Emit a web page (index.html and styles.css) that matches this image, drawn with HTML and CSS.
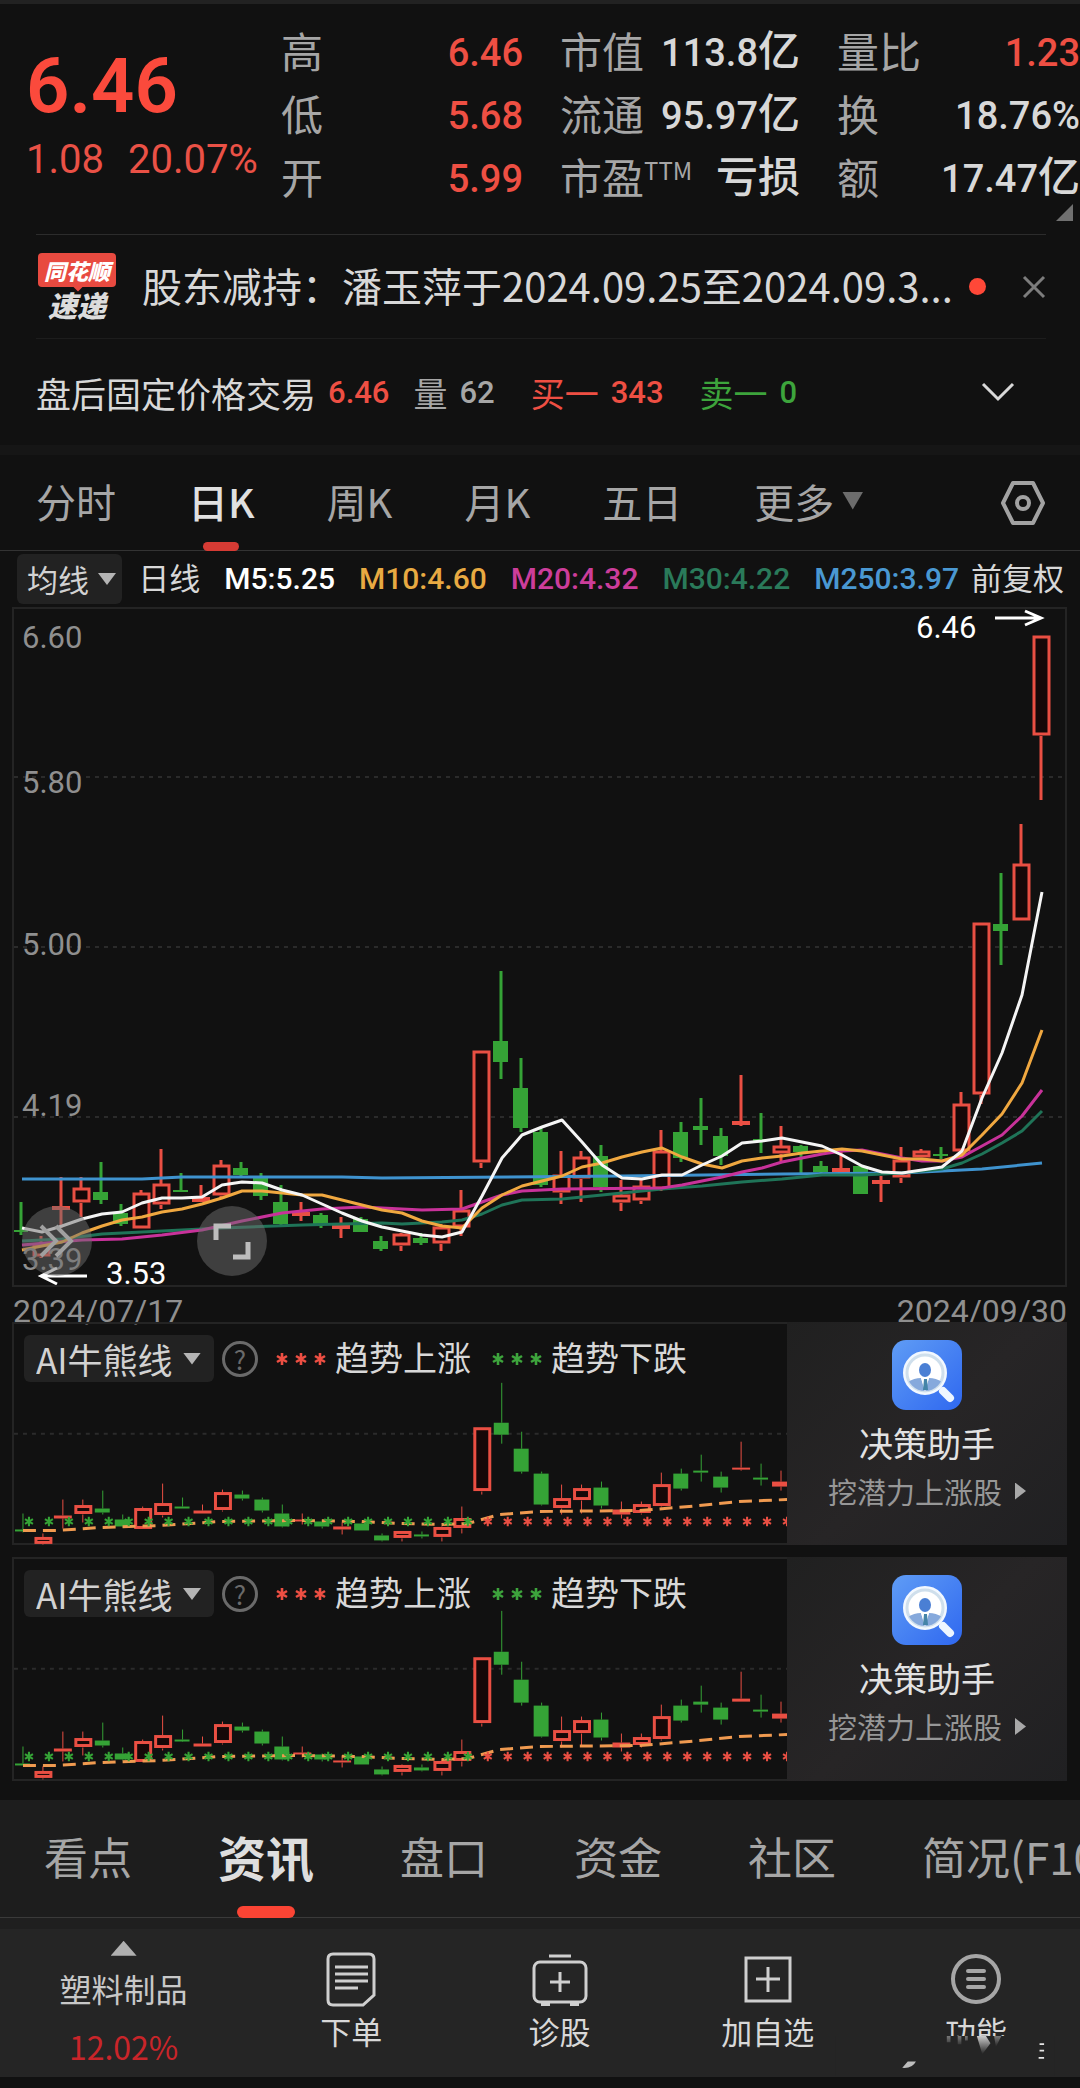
FILE: index.html
```html
<!DOCTYPE html>
<html lang="zh-CN">
<head>
    <meta charset="UTF-8">
    <meta name="viewport" content="width=device-width, initial-scale=1.0">
    <title>个股行情 - 日K</title>
    <link rel="stylesheet" href="styles.css">
</head>
<body>
    <header class="quote">
        <div class="price">
            <div class="price-now">6.46</div>
            <div class="price-change"><span>1.08</span><span>20.07%</span></div>
        </div>
        <dl class="stats">
            <div><dt>高</dt><dd class="up">6.46</dd></div>
            <div><dt>低</dt><dd class="up">5.68</dd></div>
            <div><dt>开</dt><dd class="up">5.99</dd></div>
        </dl>
        <dl class="stats">
            <div><dt>市值</dt><dd>113.8<span class="unit">亿</span></dd></div>
            <div><dt>流通</dt><dd>95.97<span class="unit">亿</span></dd></div>
            <div><dt>市盈<span class="ttm">TTM</span></dt><dd><span class="unit">亏损</span></dd></div>
        </dl>
        <dl class="stats">
            <div><dt>量比</dt><dd class="up">1.23</dd></div>
            <div><dt>换</dt><dd>18.76%</dd></div>
            <div><dt>额</dt><dd>17.47<span class="unit">亿</span></dd></div>
        </dl>
        <span class="corner"></span>
    </header>

    <section class="news">
        <div class="news-logo">
            <span class="news-brand">同花顺</span>
            <span class="news-name">速递</span>
        </div>
        <a class="news-text" href="#">股东减持：潘玉萍于2024.09.25至2024.09.3...</a>
        <span class="news-dot"></span>
        <button class="icon-btn" type="button" aria-label="关闭">
            <svg width="24" height="24" viewBox="0 0 24 24"><path d="M2 2L22 22M22 2L2 22" stroke="#7d7d7d" stroke-width="3"/></svg>
        </button>
    </section>

    <section class="after-hours">
        <span class="ah-title">盘后固定价格交易</span>
        <b class="up ah-price">6.46</b>
        <span class="muted">量</span><b class="muted ah-volume">62</b>
        <span class="up">买一</span><b class="up ah-buy">343</b>
        <span class="down">卖一</span><b class="down">0</b>
        <button class="icon-btn ah-more" type="button" aria-label="展开">
            <svg width="34" height="22" viewBox="0 0 34 22"><path d="M2 3L17 18L32 3" fill="none" stroke="#d8d8d8" stroke-width="3"/></svg>
        </button>
    </section>

    <nav class="periods">
        <button type="button">分时</button>
        <button type="button" class="active">日K</button>
        <button type="button">周K</button>
        <button type="button">月K</button>
        <button type="button">五日</button>
        <button type="button" class="more">更多<i class="caret"></i></button>
        <button type="button" class="settings" aria-label="设置">
            <svg width="46" height="46" viewBox="0 0 46 46" fill="none" stroke="#a2a2a2" stroke-width="4">
                <path d="M13 3H33L43 23L33 43H13L3 23Z" stroke-linejoin="round"/>
                <circle cx="23" cy="23" r="6"/>
            </svg>
        </button>
    </nav>

    <section class="averages">
        <label class="drop drop-ma">
            <select aria-label="主图指标"><option>均线</option></select>
            <i class="caret"></i>
        </label>
        <span class="ma-cycle">日线</span>
        <span class="ma-item m5">M5:5.25</span>
        <span class="ma-item m10">M10:4.60</span>
        <span class="ma-item m20">M20:4.32</span>
        <span class="ma-item m30">M30:4.22</span>
        <span class="ma-item m250">M250:3.97</span>
        <span class="ma-adjust">前复权</span>
    </section>

    <section class="chart">
        <svg id="kline" viewBox="13 607 1055 680"></svg>
        <button class="round round-left" type="button" aria-label="展开左侧">
            <svg viewBox="0 0 70 70" fill="none" stroke="#a0a0a0" stroke-width="4"><path d="M19 20L34 35L19 50M34 20L49 35L34 50"/></svg>
        </button>
        <button class="round round-full" type="button" aria-label="全屏">
            <svg viewBox="0 0 70 70" fill="none" stroke="#bdbdbd" stroke-width="5"><path d="M19 34V20H34M51 36V51H36"/></svg>
        </button>
    </section>
    <div class="dates"><span>2024/07/17</span><span>2024/09/30</span></div>

    <section class="panel">
        <div class="panel-main">
            <svg class="mini" data-top="61" data-ratio="0.568" viewBox="13 0 775 224"></svg>
            <div class="panel-head">
                <label class="drop drop-ai">
                    <select aria-label="副图指标一"><option>AI牛熊线</option></select>
                    <i class="caret"></i>
                </label>
                <button class="help" type="button">?</button>
                <svg class="stars up" viewBox="0 0 52 14"><use href="#star" x="7" y="7"/><use href="#star" x="26" y="7"/><use href="#star" x="45" y="7"/></svg>
                <span>趋势上涨</span>
                <svg class="stars down" viewBox="0 0 52 14"><use href="#star" x="7" y="7"/><use href="#star" x="26" y="7"/><use href="#star" x="45" y="7"/></svg>
                <span>趋势下跌</span>
            </div>
        </div>
        <a class="helper" href="#">
            <svg class="helper-icon" viewBox="0 0 70 70"><use href="#helper"/></svg>
            <span class="helper-title">决策助手</span>
            <span class="helper-sub">挖潜力上涨股<i class="arrow"></i></span>
        </a>
    </section>

    <section class="panel">
        <div class="panel-main">
            <svg class="mini" data-top="54" data-ratio="0.589" viewBox="13 0 775 224"></svg>
            <div class="panel-head">
                <label class="drop drop-ai">
                    <select aria-label="副图指标二"><option>AI牛熊线</option></select>
                    <i class="caret"></i>
                </label>
                <button class="help" type="button">?</button>
                <svg class="stars up" viewBox="0 0 52 14"><use href="#star" x="7" y="7"/><use href="#star" x="26" y="7"/><use href="#star" x="45" y="7"/></svg>
                <span>趋势上涨</span>
                <svg class="stars down" viewBox="0 0 52 14"><use href="#star" x="7" y="7"/><use href="#star" x="26" y="7"/><use href="#star" x="45" y="7"/></svg>
                <span>趋势下跌</span>
            </div>
        </div>
        <a class="helper" href="#">
            <svg class="helper-icon" viewBox="0 0 70 70"><use href="#helper"/></svg>
            <span class="helper-title">决策助手</span>
            <span class="helper-sub">挖潜力上涨股<i class="arrow"></i></span>
        </a>
    </section>

    <nav class="sections">
        <button type="button">看点</button>
        <button type="button" class="active">资讯</button>
        <button type="button">盘口</button>
        <button type="button">资金</button>
        <button type="button">社区</button>
        <button type="button">简况(F10)</button>
    </nav>

    <footer class="toolbar">
        <button type="button" class="sector">
            <i class="caret-up"></i>
            <span>塑料制品</span>
            <span class="sector-change">12.02%</span>
        </button>
        <button type="button">
            <svg width="56" height="56" viewBox="0 0 56 56" fill="none" stroke="#cfcfcf" stroke-width="3">
                <path d="M10 3H46Q51 3 51 8V44L40 54H10Q5 54 5 49V8Q5 3 10 3Z"/>
                <path d="M12 16H45M12 23H45M12 30H45M12 37H35"/>
            </svg>
            <span>下单</span>
        </button>
        <button type="button">
            <svg width="56" height="56" viewBox="0 0 56 56" fill="none" stroke="#cfcfcf" stroke-width="3">
                <path d="M17 5H39"/>
                <rect x="2" y="11" width="52" height="40" rx="6"/>
                <path d="M28 21V41M18 31H38"/>
                <path d="M9 53H18M38 53H47" stroke-width="4"/>
            </svg>
            <span>诊股</span>
        </button>
        <button type="button">
            <svg width="56" height="56" viewBox="0 0 56 56" fill="none" stroke="#cfcfcf" stroke-width="3">
                <rect x="6" y="7" width="44" height="43"/>
                <path d="M28 16V41M16 28H40"/>
            </svg>
            <span>加自选</span>
        </button>
        <button type="button" class="functions">
            <svg width="56" height="56" viewBox="0 0 56 56" fill="none" stroke="#a6a6a6" stroke-width="4">
                <circle cx="28" cy="28" r="23"/>
                <path d="M20 20H36M20 28H36M20 36H36" stroke-linecap="round"/>
            </svg>
            <span>功能</span>
            <svg class="smudge" viewBox="0 0 240 44">
                <defs>
                    <linearGradient id="streak" x1="0" y1="0" x2="0" y2="1">
                        <stop offset="0" stop-color="#cccccc"/>
                        <stop offset="1" stop-color="#252525"/>
                    </linearGradient>
                </defs>
                <rect width="240" height="44" fill="#252525"/>
                <path d="M155 0H165L170 8L161 20Z" fill="url(#streak)"/>
                <path d="M122 0H126V7H122ZM134 0H138V9H134ZM142 0H145V5H142ZM174 0H182L176 12Z" fill="url(#streak)" opacity="0.5"/>
                <path d="M73 35L79 28H88Q84 36 73 35Z" fill="#bdbdbd"/>
                <path d="M224 9H229M224 16H229M223 24H229" stroke="#e6e6e6" stroke-width="2"/>
            </svg>
        </button>
    </footer>

    <!-- shared symbols -->
    <svg class="symbols" width="0" height="0">
        <defs>
            <path id="star" d="M0 -6V6M-5 -3L5 3M-5 3L5 -3" fill="none" stroke="currentColor" stroke-width="2.6"/>
            <linearGradient id="helper-bg" x1="0" y1="0" x2="1" y2="1">
                <stop offset="0" stop-color="#5f9cf5"/>
                <stop offset="1" stop-color="#2f68f0"/>
            </linearGradient>
            <clipPath id="lens"><circle cx="33" cy="33" r="18"/></clipPath>
            <symbol id="helper" viewBox="0 0 70 70">
                <rect width="70" height="70" rx="14" fill="url(#helper-bg)"/>
                <path d="M51 51L58 58" stroke="#eef6ff" stroke-width="8" stroke-linecap="round"/>
                <circle cx="33" cy="33" r="20" fill="#fff" stroke="#f2f8ff" stroke-width="4"/>
                <circle cx="33" cy="33" r="18" fill="#fff" stroke="#cfdfec" stroke-width="3"/>
                <g clip-path="url(#lens)">
                    <path d="M16 54V42Q22 38 29 38L33 50L37 38Q44 38 50 42V54Z" fill="#86a9dc"/>
                    <path d="M29 38L33 52L37 38Z" fill="#fff"/>
                    <path d="M32 39H35L36 50H31Z" fill="#4584a8"/>
                </g>
                <ellipse cx="33" cy="30" rx="6" ry="7" fill="#4a7fd4"/>
            </symbol>
        </defs>
    </svg>
    <script src="chart.js"></script>
</body>
</html>
```
FILE: styles.css
```css
* {
    box-sizing: border-box;
}
body {
    margin: 0;
    background: #111;
    color: #d8d8d8;
    font-family: "Noto Sans CJK SC", sans-serif;
    border-top: 4px solid #222;
    overflow-x: hidden;
}
button, select {
    font: inherit;
    color: inherit;
    background: none;
    border: 0;
    padding: 0;
    margin: 0;
}
a {
    color: inherit;
    text-decoration: none;
}
svg {
    display: block;
}
.up {
    color: #ee4f43;
}
.down {
    color: #3da43c;
}
.muted {
    color: #a6a6a6;
}
.caret {
    width: 18px;
    height: 12px;
    background: #b4b4b4;
    clip-path: polygon(0 0, 100% 0, 50% 100%);
}

/* quote header */
.quote {
    position: relative;
    display: grid;
    grid-template-columns: minmax(0, 218fr) minmax(0, 242fr) minmax(0, 240fr) minmax(0, 243fr);
    column-gap: 37px;
    height: 230px;
    padding: 16px 0 0 26px;
}
.price {
    font-family: Roboto, sans-serif;
    color: #fb4a3c;
    white-space: nowrap;
}
.price-now {
    font-size: 76px;
    line-height: 100px;
    font-weight: 600;
    margin-top: 16px;
}
.price-change {
    display: flex;
    gap: 24px;
    font-size: 40px;
    line-height: 48px;
    color: #ea5146;
}
.stats {
    margin: 0;
}
.stats div {
    display: flex;
    justify-content: space-between;
    height: 63px;
    line-height: 60px;
    white-space: nowrap;
}
.stats dt {
    font-size: 42px;
    color: #a6a6a6;
}
.stats dd {
    margin: 0;
    font-family: Roboto, "Noto Sans CJK SC", sans-serif;
    font-size: 38px;
    font-weight: 500;
    line-height: 66px;
}
.unit {
    font-size: 42px;
    line-height: 60px;
}
.ttm {
    font-size: 24px;
    vertical-align: 14px;
    line-height: 24px;
}
.corner {
    position: absolute;
    right: 7px;
    bottom: 13px;
    width: 17px;
    height: 17px;
    background: #707070;
    clip-path: polygon(100% 0, 100% 100%, 0 100%);
}

/* news strip */
.news {
    display: flex;
    align-items: center;
    height: 105px;
    margin: 0 34px 0 36px;
    border-top: 1px solid #2c2c2c;
    border-bottom: 1px solid #1d1d1d;
}
.news-logo {
    display: flex;
    flex-direction: column;
    align-items: center;
    width: 82px;
    margin-right: 24px;
    font-weight: 900;
    font-style: italic;
    white-space: nowrap;
}
.news-brand {
    position: relative;
    width: 78px;
    font-size: 22px;
    line-height: 34px;
    text-align: center;
    color: #fff;
    background: #e84a40;
    border-radius: 4px;
}
.news-brand::after {
    content: "";
    position: absolute;
    left: 34px;
    top: 33px;
    width: 12px;
    height: 6px;
    background: #e84a40;
    clip-path: polygon(0 0, 100% 0, 50% 100%);
}
.news-name {
    font-size: 29px;
    line-height: 34px;
    color: #dcdcdc;
}
.news-text {
    padding-bottom: 4px;
    font-size: 40px;
    white-space: nowrap;
    line-height: 60px;
}
.news-dot {
    width: 17px;
    height: 17px;
    margin-left: 16px;
    border-radius: 50%;
    background: #ff4838;
}
.news .icon-btn {
    margin-left: auto;
}

/* after-hours trading */
.after-hours {
    display: flex;
    align-items: center;
    height: 116px;
    padding: 0 36px;
    font-size: 34px;
    white-space: nowrap;
    border-bottom: 10px solid #161616;
}
.ah-title {
    font-size: 35px;
}
.after-hours b {
    font-family: Roboto, sans-serif;
    font-size: 31px;
    font-weight: 500;
    margin-left: 12px;
}
.after-hours .ah-price {
    margin-right: 24px;
}
.after-hours .ah-volume {
    margin-right: 36px;
}
.after-hours .ah-buy {
    margin-right: 36px;
}
.ah-more {
    margin-left: auto;
    margin-right: 29px;
}

/* period tabs */
.periods {
    display: flex;
    align-items: center;
    gap: 72px;
    height: 96px;
    padding: 0 34px 0 36px;
    font-size: 40px;
    color: #a6a6a6;
    border-bottom: 1px solid #333;
}
.periods button {
    position: relative;
    height: 96px;
    padding-bottom: 4px;
    white-space: nowrap;
}
.periods .active {
    color: #e0e0e0;
    font-weight: 500;
}
.periods .active::after {
    content: "";
    position: absolute;
    left: 50%;
    bottom: 0;
    width: 36px;
    height: 9px;
    margin-left: -18px;
    border-radius: 5px;
    background: #d63b34;
}
.periods .more {
    display: flex;
    align-items: center;
    gap: 8px;
}
.more .caret {
    width: 21px;
    height: 18px;
    background: #6c6c6c;
}
.periods .settings {
    margin-left: auto;
    padding-bottom: 0;
}

/* moving averages */
.averages {
    display: flex;
    align-items: center;
    gap: 24px;
    height: 56px;
    padding: 0 16px 0 17px;
    font-size: 31px;
    line-height: 52px;
    white-space: nowrap;
}
.drop {
    display: flex;
    align-items: center;
    background: #222;
    border-radius: 6px;
    color: #d2d2d2;
}
.drop select {
    appearance: none;
}
.drop-ma {
    width: 110px;
    height: 50px;
    padding-left: 10px;
    gap: 9px;
}
.ma-cycle {
    margin-left: -8px;
    padding-bottom: 4px;
}
.ma-adjust {
    margin-left: -12px;
    padding-bottom: 4px;
}
.ma-item {
    font-family: Roboto, sans-serif;
    font-size: 30px;
    font-weight: 500;
}
.m5 {
    color: #fff;
}
.m10 {
    color: #e8aa42;
}
.m20 {
    color: #cc3d9b;
}
.m30 {
    color: #2a7a5a;
}
.m250 {
    color: #4a98d2;
}

/* main chart */
.chart {
    position: relative;
    margin: 0 13px 0 12px;
    outline: 2px solid #242424;
    outline-offset: -2px;
}
#kline {
    overflow: visible;
}
.chart text {
    font-family: Roboto, sans-serif;
    font-size: 31px;
}
.grid {
    stroke: #2b2b2b;
    stroke-width: 2;
    stroke-dasharray: 4 5;
}
.round {
    position: absolute;
    bottom: 11px;
    width: 70px;
    height: 70px;
    border-radius: 50%;
    background: rgba(110, 110, 110, 0.5);
}
.round-left {
    left: 10px;
}
.round-full {
    left: 185px;
}
.dates {
    display: flex;
    justify-content: space-between;
    height: 35px;
    padding: 5px 13px 0;
    font-family: Roboto, sans-serif;
    font-size: 32px;
    line-height: 38px;
    color: #8f8f8f;
}

/* indicator panels */
.panel {
    display: grid;
    grid-template-columns: 775fr 280fr;
    margin: 0 13px 12px 12px;
}
.panel-main {
    position: relative;
    border: solid #242424;
    border-width: 2px 0 2px 2px;
}
.mini {
    width: 100%;
    margin: -2px 0;
    overflow: hidden;
}
.panel-head {
    position: absolute;
    left: 10px;
    top: 9px;
    display: flex;
    align-items: center;
    font-size: 34px;
    line-height: 47px;
    white-space: nowrap;
}
.panel-head span {
    padding-bottom: 4px;
}
.drop-ai {
    width: 190px;
    height: 47px;
    padding-left: 12px;
    gap: 10px;
}
.drop-ai select {
    height: 47px;
    padding-bottom: 4px;
    font-size: 35px;
}
.help {
    width: 36px;
    height: 36px;
    margin: 0 17px 0 8px;
    border: 3px solid #6a6a6a;
    border-radius: 50%;
    color: #6a6a6a;
    font-size: 26px;
    line-height: 28px;
}
.stars {
    width: 52px;
    height: 14px;
    margin-right: 8px;
}
.stars.down {
    margin-left: 20px;
}
.helper {
    display: flex;
    flex-direction: column;
    align-items: center;
    padding-top: 18px;
    background: linear-gradient(135deg, #202020, #272526 50%, #202022);
}
.helper-icon {
    width: 70px;
    height: 70px;
}
.helper-title {
    margin-top: 8px;
    font-size: 34px;
    line-height: 50px;
    color: #e2e2e2;
}
.helper-sub {
    display: flex;
    align-items: center;
    gap: 13px;
    font-size: 29px;
    line-height: 46px;
    color: #979797;
}
.arrow {
    width: 11px;
    height: 17px;
    background: #a8a8a8;
    clip-path: polygon(0 0, 100% 50%, 0 100%);
}

/* section tabs */
.sections {
    display: flex;
    gap: 86px;
    height: 129px;
    margin-top: 19px;
    padding-left: 44px;
    overflow: hidden;
    font-size: 44px;
    color: #a6a6a6;
    background: linear-gradient(#1d1d1d 117px, #3a3a3a 117px, #3a3a3a 118px, #1f1f1f 118px);
}
.sections button {
    position: relative;
    height: 118px;
    padding-bottom: 6px;
    white-space: nowrap;
}
.sections .active {
    font-size: 48px;
    font-weight: 700;
    color: #dedede;
}
.sections .active::after {
    content: "";
    position: absolute;
    left: 50%;
    bottom: 0;
    width: 58px;
    height: 12px;
    margin-left: -29px;
    border-radius: 6px;
    background: #fb4434;
}

/* bottom toolbar */
.toolbar {
    display: grid;
    grid-template-columns: 247fr 208fr 208fr 208fr 208fr;
    height: 148px;
    margin-bottom: 10px;
    background: #252525;
    font-size: 31px;
}
.toolbar button {
    position: relative;
    display: flex;
    flex-direction: column;
    align-items: center;
    padding-top: 22px;
    line-height: 48px;
}
.toolbar .sector {
    padding-top: 12px;
    font-size: 32px;
    color: #c8c8c8;
}
.caret-up {
    width: 26px;
    height: 15px;
    margin-bottom: 8px;
    background: #b0b0b0;
    clip-path: polygon(50% 0, 100% 100%, 0 100%);
}
.sector-change {
    margin-top: 10px;
    color: #c9252a;
}
.smudge {
    position: absolute;
    left: -47px;
    top: 107px;
    width: 240px;
    height: 40px;
}
```
FILE: chart.js
```js
// [type, high, bodyTop, bodyBottom, low], one row per trading day
const days = [
    ['d', 1202, 1230, 1232, 1235], ['u', 1236, 1244, 1257, 1258], ['u', 1177, 1206, 1210, 1228],
    ['u', 1177, 1188, 1203, 1217], ['d', 1162, 1192, 1200, 1204], ['d', 1204, 1213, 1224, 1226],
    ['u', 1190, 1193, 1229, 1229], ['u', 1149, 1184, 1205, 1209], ['d', 1173, 1190, 1192, 1192],
    ['u', 1185, 1197, 1202, 1202], ['u', 1160, 1165, 1196, 1198], ['d', 1162, 1168, 1175, 1178],
    ['d', 1173, 1177, 1196, 1200], ['d', 1185, 1202, 1224, 1226], ['u', 1202, 1212, 1216, 1221],
    ['d', 1213, 1215, 1224, 1228], ['u', 1217, 1225, 1229, 1238], ['d', 1217, 1219, 1232, 1232],
    ['d', 1236, 1241, 1249, 1251], ['u', 1233, 1234, 1246, 1251], ['d', 1233, 1238, 1243, 1245],
    ['u', 1224, 1227, 1244, 1251], ['u', 1190, 1210, 1228, 1236], ['u', 1051, 1051, 1163, 1168],
    ['d', 971, 1041, 1062, 1079], ['d', 1058, 1088, 1128, 1132], ['d', 1128, 1132, 1185, 1187],
    ['u', 1151, 1175, 1193, 1204], ['u', 1151, 1157, 1179, 1202], ['d', 1145, 1156, 1187, 1192],
    ['u', 1180, 1195, 1203, 1211], ['u', 1180, 1186, 1201, 1204], ['u', 1130, 1151, 1190, 1191],
    ['d', 1122, 1132, 1158, 1162], ['d', 1098, 1126, 1130, 1145], ['d', 1128, 1136, 1156, 1165],
    ['u', 1075, 1121, 1125, 1126], ['d', 1113, 1139, 1141, 1153], ['u', 1126, 1146, 1154, 1161],
    ['d', 1145, 1146, 1152, 1173], ['d', 1161, 1166, 1172, 1173], ['u', 1152, 1168, 1172, 1172],
    ['d', 1166, 1166, 1194, 1194], ['u', 1176, 1180, 1184, 1202], ['u', 1147, 1160, 1178, 1183],
    ['u', 1149, 1151, 1158, 1162], ['d', 1147, 1154, 1156, 1159], ['u', 1092, 1104, 1152, 1154],
    ['u', 923, 923, 1095, 1104], ['d', 873, 924, 931, 965], ['u', 824, 864, 921, 921],
    ['u', 636, 636, 736, 800]
];

// moving averages: [day, y] pairs
const averages = {
    '#f5f5f5': [[0, 1228], [1, 1232], [2, 1226], [3, 1219], [4, 1214], [5, 1212], [6, 1203], [7, 1198], [8, 1198], [9, 1197], [10, 1185], [11, 1182], [12, 1183], [13, 1190], [14, 1195], [15, 1204], [16, 1213], [17, 1221], [18, 1227], [19, 1231], [20, 1235], [21, 1237], [22, 1232], [23, 1196], [24, 1158], [25, 1135], [26, 1127], [27, 1120], [28, 1142], [29, 1165], [30, 1178], [31, 1179], [32, 1175], [33, 1175], [34, 1165], [35, 1156], [36, 1143], [37, 1141], [38, 1138], [39, 1142], [40, 1146], [41, 1155], [42, 1166], [43, 1172], [44, 1173], [45, 1170], [46, 1167], [47, 1151], [48, 1098], [49, 1053], [50, 995], [51, 892]],
    '#f0a840': [[0, 1250], [1, 1246], [2, 1242], [3, 1233], [4, 1226], [5, 1220], [6, 1217], [7, 1212], [8, 1209], [9, 1204], [10, 1198], [11, 1191], [12, 1191], [13, 1193], [14, 1195], [15, 1195], [16, 1200], [17, 1205], [18, 1210], [19, 1213], [20, 1221], [21, 1226], [22, 1228], [23, 1208], [24, 1195], [25, 1186], [26, 1181], [27, 1176], [28, 1167], [29, 1163], [30, 1157], [31, 1152], [32, 1148], [33, 1157], [34, 1164], [35, 1168], [36, 1161], [37, 1158], [38, 1156], [39, 1153], [40, 1151], [41, 1149], [42, 1151], [43, 1155], [44, 1159], [45, 1159], [46, 1161], [47, 1155], [48, 1135], [49, 1114], [50, 1083], [51, 1030]],
    '#c8329a': [[0, 1245], [3, 1240], [5, 1239], [7, 1235], [9, 1230], [11, 1221], [13, 1213], [14, 1211], [15, 1209], [17, 1207], [19, 1209], [20, 1210], [22, 1209], [23, 1202], [24, 1195], [25, 1191], [27, 1189], [32, 1188], [33, 1185], [34, 1181], [35, 1177], [36, 1172], [37, 1168], [38, 1162], [39, 1158], [40, 1154], [41, 1151], [42, 1150], [43, 1154], [44, 1158], [45, 1161], [46, 1161], [47, 1157], [48, 1146], [49, 1135], [50, 1116], [51, 1090]],
    '#1f7458': [[0, 1241], [2, 1239], [4, 1234], [6, 1232], [8, 1230], [10, 1228], [14, 1225], [18, 1223], [19, 1224], [21, 1222], [22, 1220], [23, 1214], [24, 1205], [25, 1200], [27, 1199], [29, 1195], [32, 1189], [34, 1186], [36, 1182], [38, 1179], [40, 1175], [42, 1175], [44, 1173], [46, 1169], [47, 1163], [48, 1154], [49, 1143], [50, 1131], [51, 1111]],
    '#3f93cf': [[0, 1179], [6, 1179], [8, 1177], [16, 1177], [18, 1178], [30, 1176], [38, 1174], [44, 1173], [48, 1169], [51, 1163]]
};

const bullLine = [[22, 209], [55, 209], [100, 206], [160, 204], [220, 200], [300, 199], [360, 200], [400, 202], [440, 203], [468, 202], [500, 193], [540, 190], [640, 189], [690, 185], [740, 180], [788, 178]];

const UP = '#ea4f43';
const DOWN = '#35a336';
const dayX = i => 22 + 20 * i;

function candles(y, wick) {
    return days.map(([type, high, top, bottom, low], i) => {
        const x = dayX(i);
        const t = y(top);
        const h = Math.max(y(bottom) - t, 2);
        const color = type === 'u' ? UP : DOWN;
        let out = `<path d="M${x} ${y(high)}V${t}M${x} ${t + h}V${y(low)}" stroke="${color}" stroke-width="${wick}"/>`;
        if (type === 'd') {
            out += `<rect x="${x - 8}" y="${t}" width="15" height="${h}" fill="${color}"/>`;
        } else if (h < 6) {
            out += `<rect x="${x - 9}" y="${t}" width="18" height="${h}" fill="${color}"/>`;
        } else {
            out += `<rect x="${x - 7}" y="${t + 1}" width="15" height="${h - 3}" fill="#160808" stroke="${color}" stroke-width="3"/>`;
        }
        return out;
    }).join('');
}

function drawMain() {
    let out = '';
    for (const y of [777, 947, 1117]) {
        out += `<path class="grid" d="M15 ${y}H1066"/>`;
    }
    out += candles(v => v, 3);
    for (const color of Object.keys(averages).reverse()) {
        const pts = averages[color].map(([i, y]) => `${dayX(i) + 1},${y}`).join(' ');
        out += `<polyline points="${pts}" fill="none" stroke="${color}" stroke-width="3" stroke-linejoin="round"/>`;
    }
    const labels = [['6.60', 648], ['5.80', 793], ['5.00', 955], ['4.19', 1116], ['3.39', 1270]];
    for (const [text, y] of labels) {
        out += `<text x="23" y="${y}" fill="#8f8f8f">${text}</text>`;
    }
    out += '<text x="917" y="638" fill="#fff">6.46</text><text x="107" y="1284" fill="#fff">3.53</text>';
    out += '<path d="M996 618H1041M1026 611L1042 618L1026 625M88 1276H43M58 1268L42 1276L58 1284" fill="none" stroke="#fff" stroke-width="3"/>';
    document.getElementById('kline').innerHTML = out;
}

function drawMini(svg) {
    const top = Number(svg.dataset.top);
    const ratio = Number(svg.dataset.ratio);
    let out = '<path class="grid" d="M13 112H788"/>';
    out += candles(v => Math.round(top + (v - 971) * ratio), 1);
    out += `<polyline points="${bullLine.join(' ')}" fill="none" stroke="#f09a50" stroke-width="3" stroke-dasharray="13 7"/>`;
    for (let x = 28; x < 790; x += 20) {
        out += `<use href="#star" x="${x}" y="200" transform-origin="${x} 200" transform="scale(0.8)" color="${x < 480 ? DOWN : UP}"/>`;
    }
    svg.innerHTML = out;
}

drawMain();
document.querySelectorAll('.mini').forEach(drawMini);
```
